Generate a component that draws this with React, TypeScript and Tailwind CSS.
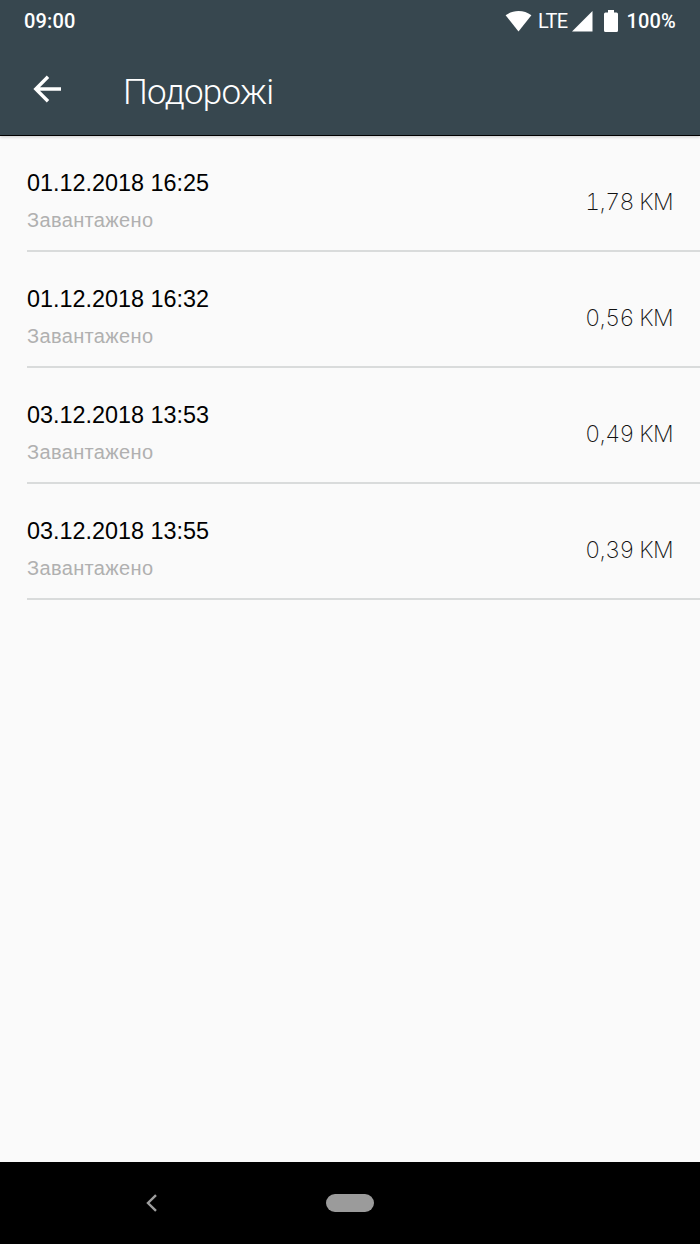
import React from "react";

interface Trip {
    date: string;
    status: string;
    distance: string;
}

const trips: Trip[] = [
    { date: "01.12.2018 16:25", status: "Завантажено", distance: "1,78 KM" },
    { date: "01.12.2018 16:32", status: "Завантажено", distance: "0,56 KM" },
    { date: "03.12.2018 13:53", status: "Завантажено", distance: "0,49 KM" },
    { date: "03.12.2018 13:55", status: "Завантажено", distance: "0,39 KM" },
];

function StatusBar() {
    return (
        <div className="flex h-[42px] items-center justify-between px-6 text-[20px] font-medium leading-none">
            <span className="tracking-[0.15px]">09:00</span>
            <div className="flex items-center">
                <svg className="h-[21px] w-[27px]" viewBox="0 0 27 21" fill="currentColor">
                    <path d="M13.5 20.5 0.6 4.3C4.3 1.4 8.8 0 13.5 0s9.2 1.4 12.9 4.3z" />
                </svg>
                <span className="ml-[6px] w-[29px] font-normal tracking-[-0.7px]">LTE</span>
                <svg className="ml-[5px] h-[21px] w-[21px]" viewBox="0 0 21 21" fill="currentColor">
                    <path d="M0 20.5 20.5 0v20.5z" />
                </svg>
                <svg className="ml-[11px] h-[22px] w-[14px]" viewBox="0 0 14 22" fill="currentColor">
                    <path d="M4 0h6v2.5h2.5Q14 2.5 14 4v16.5Q14 22 12.5 22h-11Q0 22 0 20.5V4q0-1.5 1.5-1.5H4z" />
                </svg>
                <span className="ml-[8.5px] tracking-[0.15px]">100%</span>
            </div>
        </div>
    );
}

function AppBar({ title }: { title: string }) {
    return (
        <div className="flex h-[93px] items-center pl-[33px]">
            <button aria-label="Назад">
                <svg className="h-[28px] w-[28px]" viewBox="0 0 28 28" fill="none" stroke="currentColor" strokeWidth="3.4">
                    <path d="M28.5 14H3M15 1.8 2.8 14 15 26.2" />
                </svg>
            </button>
            <h1 className="ml-[62px] pt-[7px] text-[35px] font-light leading-none tracking-[-0.75px]">{title}</h1>
        </div>
    );
}

function TripRow({ trip }: { trip: Trip }) {
    return (
        <li className="ml-[27px] flex h-[116px] items-center justify-between border-b-2 border-[#d9dbdb] pr-[27px] pt-[16px]">
            <div className="flex flex-col gap-[14px] font-['Liberation_Sans',sans-serif] leading-none">
                <span className="text-[23.4px] text-black">{trip.date}</span>
                <span className="text-[20px] tracking-[0.35px] text-[#b0b0b0]">{trip.status}</span>
            </div>
            <span className="pt-[3px] font-['Inter',sans-serif] text-[23px] font-extralight tabular-nums tracking-[-0.6px] text-[#111]">{trip.distance}</span>
        </li>
    );
}

export default function App() {
    return (
        <div className="flex h-[1244px] w-[700px] flex-col overflow-hidden bg-[#fafafa]">
            <header className="border-b border-black bg-[#37474f] font-['Roboto',sans-serif] text-white shadow-[0_1px_3px_rgba(0,0,0,0.2)]">
                <StatusBar />
                <AppBar title="Подорожі" />
            </header>
            <ul className="flex-1">
                {trips.map((trip) => (
                    <TripRow key={trip.date} trip={trip} />
                ))}
            </ul>
            <nav className="flex h-[82px] items-center bg-black pl-[146px]">
                <svg className="h-[18px] w-[11px]" viewBox="0 0 11 18" fill="none" stroke="#9e9e9e" strokeWidth="2.4">
                    <path d="M10 1.2 2 9l8 7.8" />
                </svg>
                <div className="ml-[169px] h-[18px] w-[48px] rounded-full bg-[#9b9b9b]" />
            </nav>
        </div>
    );
}
